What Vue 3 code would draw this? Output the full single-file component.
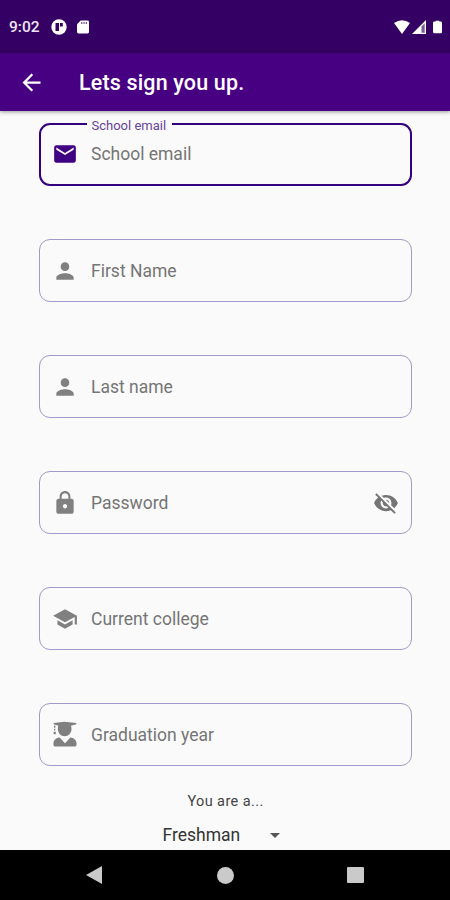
<script setup>
const fields = [
  {
    label: 'School email',
    icon: 'M20 4H4c-1.1 0-2 .9-2 2v12c0 1.1.9 2 2 2h16c1.1 0 2-.9 2-2V6c0-1.1-.9-2-2-2zm0 4-8 5-8-5V6l8 5 8-5v2z',
    active: true,
  },
  {
    label: 'First Name',
    icon: 'M12 12c2.21 0 4-1.79 4-4s-1.79-4-4-4-4 1.79-4 4 1.79 4 4 4zm0 2c-2.67 0-8 1.34-8 4v2h16v-2c0-2.66-5.33-4-8-4z',
  },
  {
    label: 'Last name',
    icon: 'M12 12c2.21 0 4-1.79 4-4s-1.79-4-4-4-4 1.79-4 4 1.79 4 4 4zm0 2c-2.67 0-8 1.34-8 4v2h16v-2c0-2.66-5.33-4-8-4z',
  },
  {
    label: 'Password',
    icon: 'M18 8h-1V6c0-2.76-2.24-5-5-5S7 3.24 7 6v2H6c-1.1 0-2 .9-2 2v10c0 1.1.9 2 2 2h12c1.1 0 2-.9 2-2V10c0-1.1-.9-2-2-2zm-6 9c-1.1 0-2-.9-2-2s.9-2 2-2 2 .9 2 2-.9 2-2 2zm3.1-9H8.9V6c0-1.71 1.39-3.1 3.1-3.1s3.1 1.39 3.1 3.1v2z',
    secret: true,
  },
  {
    label: 'Current college',
    icon: 'M5 13.18v4L12 21l7-3.82v-4L12 17l-7-3.82zM12 3 1 9l11 6 9-4.91V17h2V9L12 3z',
  },
  {
    label: 'Graduation year',
    icon: 'M1.5.9 11.5-.3 22.5.9v1.2l-5 1.3q.5 1.3.5 3.1c0 3.7-2.8 6.7-6.3 6.7s-6.3-3-6.3-6.7q0-1.8.5-3.1L1.5 2.1zM1.9 3.3h1.2v2H1.9zM1.9 6.3h1.2v1.6H1.9zM1.5 8.9h2v2.3h-2zM7 14.2l5 5.3 5-5.3c3.3.2 5.7 2.6 5.7 5.7v.9c0 1.1-.8 1.9-1.9 1.9H3.2c-1.1 0-1.9-.8-1.9-1.9v-.9c0-3.1 2.4-5.5 5.7-5.7z',
  },
]
</script>

<template>
  <div class="screen">
    <header class="status">
      <span class="time">9:02</span>
      <svg class="app-icon" viewBox="0 0 16 16">
        <circle cx="8" cy="8" r="7.7" fill="#fff" />
        <path d="M4.5 4H8v8H4.5zM9 4h2.8v3.5H9z" fill="#350063" />
      </svg>
      <svg class="sd" viewBox="0 0 13 14">
        <path d="M4 0h7.5Q13 0 13 1.5v11Q13 14 11.5 14h-10Q0 14 0 12.5V4z" fill="#fff" />
        <path d="M4.5 1.7h1.3v2H4.5zM7 1.7h1.3v2H7zM9.5 1.7h1.3v2H9.5z" fill="#350063" opacity=".7" />
      </svg>
      <div class="signals">
        <svg class="wifi" viewBox="0 0 16 14"><path d="M8 14 0 3Q8-2.5 16 3z" fill="#fff" /></svg>
        <svg class="cell" viewBox="0 0 14 14">
          <path d="M0 14 14 0v14z" fill="#fff" />
          <path d="M9.5 6.5 12.7 3.3v9.5H9.5z" fill="#350063" opacity=".65" />
        </svg>
        <svg class="battery" viewBox="0 0 10 14"><path d="M3 0h4v1h1.5Q10 1 10 2.5v10Q10 14 8.5 14h-7Q0 14 0 12.5v-10Q0 1 1.5 1H3z" fill="#fff" /></svg>
      </div>
    </header>

    <div class="appbar">
      <svg class="back" viewBox="0 0 24 24"><path d="M20 11H7.83l5.59-5.59L12 4l-8 8 8 8 1.41-1.41L7.83 13H20v-2z" fill="#fff" /></svg>
      <h1>Lets sign you up.</h1>
    </div>

    <main>
      <div class="fields">
        <div v-for="f in fields" :key="f.label" class="field" :class="{ active: f.active }">
          <span v-if="f.active" class="floating">{{ f.label }}</span>
          <svg class="icon" viewBox="0 0 24 24"><path :d="f.icon" /></svg>
          <span class="hint">{{ f.label }}</span>
          <svg v-if="f.secret" class="eye" viewBox="0 0 24 24">
            <path d="M12 7c2.76 0 5 2.24 5 5 0 .65-.13 1.26-.36 1.83l2.92 2.92c1.51-1.26 2.7-2.89 3.43-4.75-1.73-4.39-6-7.5-11-7.5-1.4 0-2.74.25-3.98.7l2.16 2.16C10.74 7.13 11.35 7 12 7zM2 4.27l2.28 2.28.46.46C3.08 8.3 1.78 10.02 1 12c1.73 4.39 6 7.5 11 7.5 1.55 0 3.03-.3 4.38-.84l.42.42L19.73 22 21 20.73 3.27 3 2 4.27zM7.53 9.8l1.55 1.55c-.05.21-.08.43-.08.65 0 1.66 1.34 3 3 3 .22 0 .44-.03.65-.08l1.55 1.55c-.67.33-1.41.53-2.2.53-2.76 0-5-2.24-5-5 0-.79.2-1.53.53-2.2zm4.31-.78 3.15 3.15.02-.16c0-1.66-1.34-3-3-3l-.17.01z" />
          </svg>
        </div>
      </div>
      <p class="question">You are a...</p>
      <div class="select">
        <span>Freshman</span>
        <svg viewBox="0 0 10 5"><path d="M0 0h10L5 5z" fill="#555" /></svg>
      </div>
    </main>

    <nav>
      <svg class="nav-back" viewBox="0 0 16 18"><path d="M16 0v18L0 9z" /></svg>
      <svg class="nav-home" viewBox="0 0 16 16"><circle cx="8" cy="8" r="8" /></svg>
      <svg class="nav-recent" viewBox="0 0 17 16"><rect width="17" height="16" rx="1" /></svg>
    </nav>
  </div>
</template>

<style>
body {
  margin: 0;
}
</style>

<style scoped>
.screen {
  width: 450px;
  height: 900px;
  display: flex;
  flex-direction: column;
  overflow: hidden;
  background: #fafafa;
  font-family: Roboto, sans-serif;
}
svg {
  display: block;
  flex: none;
}
.status {
  box-sizing: border-box;
  height: 53px;
  flex: none;
  display: flex;
  align-items: center;
  padding: 1px 8px 0 9px;
  background: #350063;
}
.time {
  width: 42px;
  color: #eee6f5;
  font-size: 15.5px;
  font-weight: 500;
}
.app-icon {
  width: 16px;
  height: 16px;
}
.sd {
  width: 12px;
  height: 14px;
  margin-left: 10px;
}
.signals {
  margin-left: auto;
  display: flex;
  align-items: center;
}
.wifi {
  width: 16px;
  height: 14px;
}
.cell {
  width: 14px;
  height: 14px;
  margin: 0 7px 0 2px;
}
.battery {
  width: 9px;
  height: 14px;
}
.appbar {
  position: relative;
  height: 58px;
  flex: none;
  display: flex;
  align-items: center;
  padding-left: 18px;
  background: #480082;
  box-shadow: 0 1px 4px rgba(0, 0, 0, 0.4);
}
.back {
  width: 27px;
  height: 27px;
}
h1 {
  margin: 0 0 0 34px;
  padding-top: 2px;
  color: #fff;
  font-size: 21.5px;
  font-weight: 500;
  line-height: 28px;
  letter-spacing: 0.16px;
}
main {
  flex: 1;
  min-height: 0;
  padding: 12px 38px 0;
}
.fields {
  display: grid;
  gap: 53px;
}
.field {
  position: relative;
  box-sizing: border-box;
  height: 63px;
  display: flex;
  align-items: center;
  padding: 0 12px;
  border: 1px solid #a19bc9;
  border-radius: 11px;
  margin-left: 0.5px;
  color: #757575;
}
.field.active {
  border: 2px solid #350080;
  padding: 0 11px 2px;
}
.icon {
  width: 26px;
  height: 26px;
  fill: #808080;
  overflow: visible;
}
.active .icon {
  fill: #400082;
}
.hint {
  margin-left: 13.5px;
  font-size: 17.5px;
}
.eye {
  width: 26px;
  height: 26px;
  margin-left: auto;
  fill: #757575;
}
.floating {
  position: absolute;
  left: 46px;
  top: -7px;
  padding: 0 6px 0 5px;
  background: #fafafa;
  color: #65439c;
  font-size: 13px;
  line-height: 16px;
}
.question {
  margin: 27px 0 0 1px;
  text-align: center;
  color: #444;
  font-size: 14.5px;
  line-height: 18px;
  letter-spacing: 0.4px;
}
.select {
  display: flex;
  align-items: center;
  padding-left: 124.5px;
  margin-top: 12px;
  color: #333;
  font-size: 17.5px;
  line-height: 24px;
}
.select span {
  width: 107.5px;
}
.select svg {
  width: 10px;
  height: 5px;
}
nav {
  height: 50px;
  flex: none;
  display: flex;
  align-items: center;
  padding-left: 86px;
  background: #000;
  fill: #cacaca;
}
.nav-back {
  width: 16px;
  height: 18px;
}
.nav-home {
  width: 17px;
  height: 17px;
  margin-left: 115px;
}
.nav-recent {
  width: 17px;
  height: 16px;
  margin-left: 113px;
}
</style>
